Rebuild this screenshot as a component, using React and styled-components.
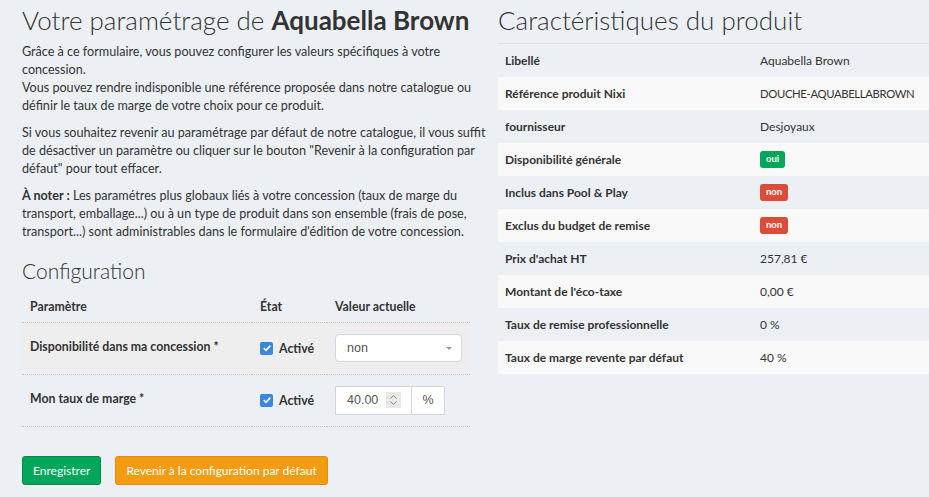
import React from "react";
import styled, { createGlobalStyle } from "styled-components";

//#region Estilos
const GlobalStyle = createGlobalStyle`
  html, body {
    margin: 0;
    padding: 0;
    background: #ecf0f5;
    overflow: hidden;
  }
  body {
    font-family: Lato, "Open Sans", sans-serif;
    color: #333;
    font-size: 13px;
  }
`;

const Page = styled.div`
  display: grid;
  grid-template-columns: 478px 476px;
  padding-left: 7px;
  width: 970px;
`;

const Column = styled.section`
  padding: 0 15px 0 ${(p) => (p.$right ? 13 : 15)}px;
`;

const Title = styled.h1`
  margin: 6px 0 8px;
  font-size: 26px;
  font-weight: 300;
  line-height: 1.1;
  color: #333;
  white-space: nowrap;

  strong {
    font-weight: 700;
  }
`;

const SubTitle = styled.h2`
  margin: 17px 0 10px;
  font-size: 21px;
  font-weight: 300;
  line-height: 1.1;
`;

const Paragraph = styled.p`
  margin: 0 0 8px;
  line-height: 18.3px;
  font-size: 12.6px;
  white-space: nowrap;
`;

const ConfigTable = styled.table`
  width: 100%;
  border-collapse: collapse;
  font-size: 12.3px;

  th {
    text-align: left;
    font-weight: 700;
    padding: 7px 8px 8px;
    border-bottom: 1px dotted #c4c4c4;
  }
  td {
    padding: 0 8px;
    height: 51px;
    border-bottom: 1px dotted #c4c4c4;
    vertical-align: middle;
  }
`;

const ConfigRow = styled.tr`
  background: ${(p) => (p.$hover ? "#eeeeee" : "transparent")};
`;

const ParamLabel = styled.span`
  font-weight: 700;
  position: relative;
  top: ${(p) => p.$up || 0}px;
`;

const State = styled.label`
  display: flex;
  align-items: center;
  gap: 6px;
  font-weight: 700;
`;

const CheckBox = styled.span`
  width: 13px;
  height: 13px;
  border-radius: 2px;
  background: #3b87dc;
  display: flex;
  align-items: center;
  justify-content: center;
`;

const SelectBox = styled.div`
  width: 127px;
  height: 28px;
  box-sizing: border-box;
  background: #fff;
  border: 1px solid #d2d6de;
  border-radius: 4px;
  display: flex;
  align-items: center;
  justify-content: space-between;
  padding: 0 9px 0 11px;
  font-family: "Liberation Sans", Arial, sans-serif;
  font-size: 12.5px;
  color: #555;
`;

const Caret = styled.span`
  width: 0;
  height: 0;
  border-left: 3px solid transparent;
  border-right: 3px solid transparent;
  border-top: 3px solid #999;
`;

const InputGroup = styled.div`
  display: flex;
  height: 29px;
  font-family: "Liberation Sans", Arial, sans-serif;
  font-size: 12.5px;
  color: #555;
`;

const NumberInput = styled.div`
  width: 77px;
  box-sizing: border-box;
  background: #fff;
  border: 1px solid #d2d6de;
  display: flex;
  align-items: center;
  padding: 0 10px 0 11px;
  justify-content: space-between;
`;

const Spinner = styled.span`
  width: 15px;
  height: 16px;
  background: #e9e9e9;
  display: flex;
  align-items: center;
  justify-content: center;
`;

const Addon = styled.div`
  width: 33px;
  box-sizing: border-box;
  background: #fff;
  border: 1px solid #d2d6de;
  border-left: none;
  display: flex;
  align-items: center;
  justify-content: center;
`;

const Actions = styled.div`
  display: flex;
  gap: 14px;
  margin-top: 29px;
`;

const Button = styled.button`
  height: 29px;
  padding: 0 10px;
  border-radius: 3px;
  border: 1px solid ${(p) => (p.$variant === "warning" ? "#e08e0b" : "#008d4c")};
  background: ${(p) => (p.$variant === "warning" ? "#f39c12" : "#00a65a")};
  color: #fff;
  font-family: Lato, "Open Sans", sans-serif;
  font-size: 12px;
`;

const InfoTable = styled.table`
  width: 100%;
  border-collapse: collapse;
  font-size: 12px;
  border-top: 1px solid #dde1e6;

  td {
    height: 33px;
    padding: 0 7px;
    vertical-align: middle;
    white-space: nowrap;
  }
  td:first-child {
    width: 241px;
    font-weight: 700;
  }
  tr:nth-child(even) {
    background: #f9f9f9;
  }
`;

const Code = styled.span`
  font-size: 11.3px;
  letter-spacing: -0.35px;
`;

const Badge = styled.span`
  display: inline-block;
  padding: 3px 6px 4px;
  border-radius: 3px;
  font-size: 9.5px;
  font-weight: 700;
  color: #fff;
  line-height: 1;
  background: ${(p) => (p.$ok ? "#00a65a" : "#dd4b39")};
`;
//#endregion

const caracteristiques = [
  ["Libellé", "Aquabella Brown"],
  ["Référence produit Nixi", <Code>DOUCHE-AQUABELLABROWN</Code>],
  ["fournisseur", "Desjoyaux"],
  ["Disponibilité générale", <Badge $ok>oui</Badge>],
  ["Inclus dans Pool & Play", <Badge>non</Badge>],
  ["Exclus du budget de remise", <Badge>non</Badge>],
  ["Prix d'achat HT", "257,81 €"],
  ["Montant de l'éco-taxe", "0,00 €"],
  ["Taux de remise professionnelle", "0 %"],
  ["Taux de marge revente par défaut", "40 %"],
];

const Coche = () => (
  <CheckBox>
    <svg width="10" height="10" viewBox="0 0 10 10">
      <path d="M1.8 5.2 L4 7.3 L8.3 2.6" fill="none" stroke="#fff" strokeWidth="1.6" />
    </svg>
  </CheckBox>
);

const App = () => {
  return (
    <>
      <GlobalStyle />
      <Page>
        <Column>
          <Title>
            Votre paramétrage de <strong>Aquabella Brown</strong>
          </Title>
          <Paragraph>
            Grâce à ce formulaire, vous pouvez configurer les valeurs spécifiques à votre
            <br />
            concession.
            <br />
            Vous pouvez rendre indisponible une référence proposée dans notre catalogue ou
            <br />
            définir le taux de marge de votre choix pour ce produit.
          </Paragraph>
          <Paragraph>
            Si vous souhaitez revenir au paramétrage par défaut de notre catalogue, il vous suffit
            <br />
            de désactiver un paramètre ou cliquer sur le bouton "Revenir à la configuration par
            <br />
            défaut" pour tout effacer.
          </Paragraph>
          <Paragraph>
            <strong>À noter :</strong> Les paramétres plus globaux liés à votre concession (taux de
            marge du
            <br />
            transport, emballage...) ou à un type de produit dans son ensemble (frais de pose,
            <br />
            transport...) sont administrables dans le formulaire d'édition de votre concession.
          </Paragraph>

          <SubTitle>Configuration</SubTitle>
          <ConfigTable>
            <thead>
              <tr>
                <th style={{ width: "215px" }}>Paramètre</th>
                <th style={{ width: "59px" }}>État</th>
                <th>Valeur actuelle</th>
              </tr>
            </thead>
            <tbody>
              <ConfigRow $hover>
                <td>
                  <ParamLabel $up={-2}>Disponibilité dans ma concession *</ParamLabel>
                </td>
                <td>
                  <State>
                    <Coche />
                    Activé
                  </State>
                </td>
                <td>
                  <SelectBox>
                    non
                    <Caret />
                  </SelectBox>
                </td>
              </ConfigRow>
              <ConfigRow>
                <td>
                  <ParamLabel $up={-2}>Mon taux de marge *</ParamLabel>
                </td>
                <td>
                  <State>
                    <Coche />
                    Activé
                  </State>
                </td>
                <td>
                  <InputGroup>
                    <NumberInput>
                      40.00
                      <Spinner>
                        <svg width="9" height="12" viewBox="0 0 9 12">
                          <path d="M1.5 4.5 L4.5 1.5 L7.5 4.5 M1.5 7.5 L4.5 10.5 L7.5 7.5" fill="none" stroke="#8a8a8a" strokeWidth="1" />
                        </svg>
                      </Spinner>
                    </NumberInput>
                    <Addon>%</Addon>
                  </InputGroup>
                </td>
              </ConfigRow>
            </tbody>
          </ConfigTable>

          <Actions>
            <Button>Enregistrer</Button>
            <Button $variant="warning">Revenir à la configuration par défaut</Button>
          </Actions>
        </Column>

        <Column $right>
          <Title>Caractéristiques du produit</Title>
          <InfoTable>
            <tbody>
              {caracteristiques.map(([libelle, valeur]) => (
                <tr key={libelle}>
                  <td>{libelle}</td>
                  <td>{valeur}</td>
                </tr>
              ))}
            </tbody>
          </InfoTable>
        </Column>
      </Page>
    </>
  );
};

export default App;
